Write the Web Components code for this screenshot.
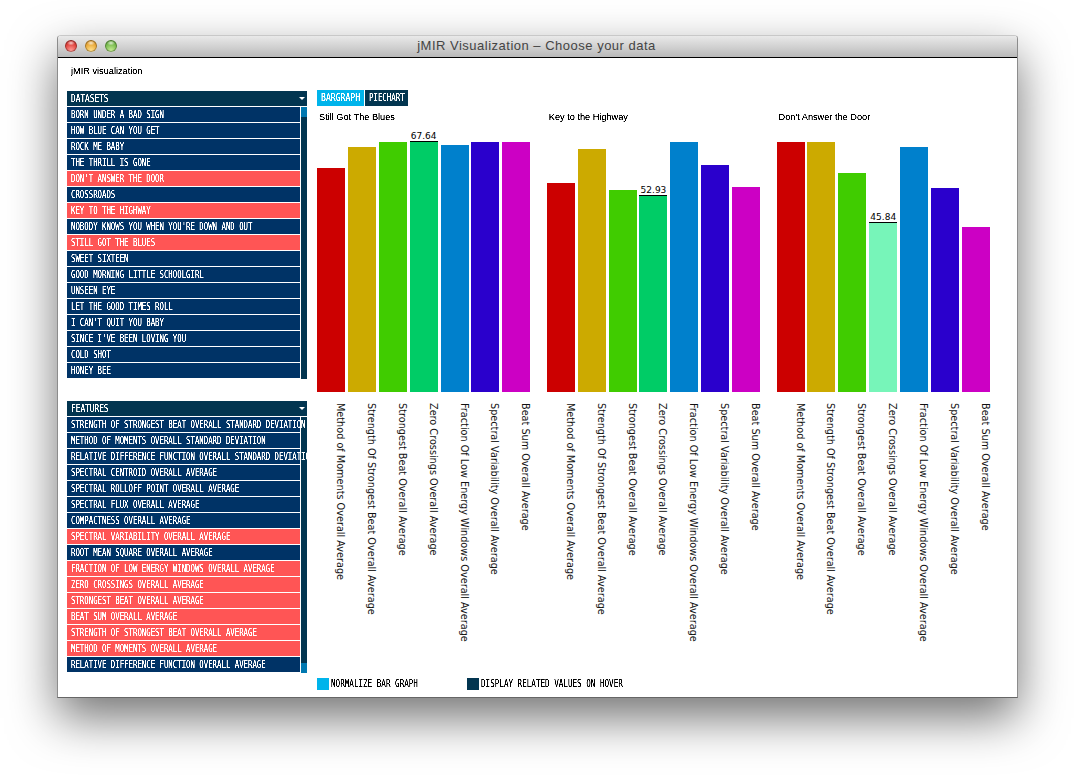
<!DOCTYPE html>
<html>
<head>
<meta charset="utf-8">
<title>jMIR Visualization - Choose your data</title>
<style>
  html, body { margin: 0; background: #fff; }
  body { height: 776px; overflow: hidden; font-family: "DejaVu Sans", sans-serif; }
</style>
</head>
<body>
<jmir-window title="jMIR Visualization – Choose your data" heading="jMIR visualization">
  <div slot="left">
    <jmir-list label="DATASETS">
      <jmir-item>BORN UNDER A BAD SIGN</jmir-item>
      <jmir-item>HOW BLUE CAN YOU GET</jmir-item>
      <jmir-item>ROCK ME BABY</jmir-item>
      <jmir-item>THE THRILL IS GONE</jmir-item>
      <jmir-item selected>DON'T ANSWER THE DOOR</jmir-item>
      <jmir-item>CROSSROADS</jmir-item>
      <jmir-item selected>KEY TO THE HIGHWAY</jmir-item>
      <jmir-item>NOBODY KNOWS YOU WHEN YOU'RE DOWN AND OUT</jmir-item>
      <jmir-item selected>STILL GOT THE BLUES</jmir-item>
      <jmir-item>SWEET SIXTEEN</jmir-item>
      <jmir-item>GOOD MORNING LITTLE SCHOOLGIRL</jmir-item>
      <jmir-item>UNSEEN EYE</jmir-item>
      <jmir-item>LET THE GOOD TIMES ROLL</jmir-item>
      <jmir-item>I CAN'T QUIT YOU BABY</jmir-item>
      <jmir-item>SINCE I'VE BEEN LOVING YOU</jmir-item>
      <jmir-item>COLD SHOT</jmir-item>
      <jmir-item>HONEY BEE</jmir-item>
    </jmir-list>
    <jmir-list label="FEATURES" thumb="bottom" style="margin-top:22px">
      <jmir-item>STRENGTH OF STRONGEST BEAT OVERALL STANDARD DEVIATION</jmir-item>
      <jmir-item>METHOD OF MOMENTS OVERALL STANDARD DEVIATION</jmir-item>
      <jmir-item>RELATIVE DIFFERENCE FUNCTION OVERALL STANDARD DEVIATION</jmir-item>
      <jmir-item>SPECTRAL CENTROID OVERALL AVERAGE</jmir-item>
      <jmir-item>SPECTRAL ROLLOFF POINT OVERALL AVERAGE</jmir-item>
      <jmir-item>SPECTRAL FLUX OVERALL AVERAGE</jmir-item>
      <jmir-item>COMPACTNESS OVERALL AVERAGE</jmir-item>
      <jmir-item selected>SPECTRAL VARIABILITY OVERALL AVERAGE</jmir-item>
      <jmir-item>ROOT MEAN SQUARE OVERALL AVERAGE</jmir-item>
      <jmir-item selected>FRACTION OF LOW ENERGY WINDOWS OVERALL AVERAGE</jmir-item>
      <jmir-item selected>ZERO CROSSINGS OVERALL AVERAGE</jmir-item>
      <jmir-item selected>STRONGEST BEAT OVERALL AVERAGE</jmir-item>
      <jmir-item selected>BEAT SUM OVERALL AVERAGE</jmir-item>
      <jmir-item selected>STRENGTH OF STRONGEST BEAT OVERALL AVERAGE</jmir-item>
      <jmir-item selected>METHOD OF MOMENTS OVERALL AVERAGE</jmir-item>
      <jmir-item>RELATIVE DIFFERENCE FUNCTION OVERALL AVERAGE</jmir-item>
    </jmir-list>
  </div>
  <jmir-tabs slot="tabs">
    <jmir-tab active style="width:47px;--sx:.81">BARGRAPH</jmir-tab>
    <jmir-tab style="width:43px;--sx:.74">PIECHART</jmir-tab>
  </jmir-tabs>
  <jmir-chart slot="charts" label="Still Got The Blues" heights="224,245,250,250,247,250,250" hover="3" value="67.64"></jmir-chart>
  <jmir-chart slot="charts" label="Key to the Highway" heights="209,243,202,196,250,227,205" hover="3" value="52.93"></jmir-chart>
  <jmir-chart slot="charts" label="Don't Answer the Door" heights="250,250,219,169,245,204,165" hover="3" value="45.84" highlight="#77f5b9"></jmir-chart>
  <jmir-check slot="options" color="#00b4eb" style="width:150px">NORMALIZE BAR GRAPH</jmir-check>
  <jmir-check slot="options" color="#023550">DISPLAY RELATED VALUES ON HOVER</jmir-check>
</jmir-window>

<script>
// Texto pixelado: la fuente original no existe, se comprime una monoespaciada
const CAPS = `
  display: block;
  font: 10px/15px "DejaVu Sans Mono", monospace;
  white-space: nowrap;
  transform: scaleX(var(--sx, .735));
  transform-origin: left center;
  filter: url(#crisp);
`;
// Filtro que endurece el borde de las letras, como en una fuente de mapa de bits
const CRISP = `
  <svg width="0" height="0" style="position:absolute">
    <filter id="crisp" x="0" y="0" width="100%" height="100%">
      <feComponentTransfer>
        <feFuncA type="linear" slope="2.6" intercept="-0.55"></feFuncA>
      </feComponentTransfer>
    </filter>
  </svg>
`;

class JmirWindow extends HTMLElement {
  constructor() {
    super();
    this.attachShadow({ mode: "open" });
    this.shadowRoot.innerHTML = `
      <style>
        :host {
          display: flex;
          flex-direction: column;
          box-sizing: border-box;
          width: 961px;
          height: 663px;
          margin: 35px 0 0 57px;
          border: 1px solid #8c8c8c;
          border-top-color: #c8c8c8;
          border-bottom-color: #666;
          border-radius: 4px 4px 0 0;
          box-shadow: 0 20px 48px rgba(0, 0, 0, .55);
          background: #fff;
        }
        .bar {
          flex: none;
          position: relative;
          display: flex;
          align-items: center;
          gap: 8px;
          box-sizing: border-box;
          height: 22px;
          padding: 0 0 2px 7px;
          border-bottom: 1px solid #000;
          border-radius: 3px 3px 0 0;
          background: linear-gradient(#e9e9e9, #d2d2d2 50%, #b9b9b9);
        }
        .light {
          width: 12px;
          height: 12px;
          border-radius: 50%;
          box-shadow: inset 0 0 0 1px rgba(0, 0, 0, .3);
        }
        .r { background: radial-gradient(ellipse 4px 2.5px at 50% 3px, rgba(255,255,255,.75), transparent), radial-gradient(circle at 50% 85%, #ff9a94, #e0443e 55%, #a81f1b); }
        .y { background: radial-gradient(ellipse 4px 2.5px at 50% 3px, rgba(255,255,255,.75), transparent), radial-gradient(circle at 50% 85%, #ffe08a, #e9a93a 55%, #b5791a); }
        .g { background: radial-gradient(ellipse 4px 2.5px at 50% 3px, rgba(255,255,255,.75), transparent), radial-gradient(circle at 50% 85%, #c4ec92, #79bb4f 55%, #4d8c2c); }
        .title {
          position: absolute;
          left: 0;
          right: 2px;
          text-align: center;
          font: 13px/20px "Liberation Sans", sans-serif;
          color: #444;
          letter-spacing: .5px;
        }
        .content {
          flex: 1;
          display: flex;
          flex-direction: column;
          padding: 8px 0 7px 9px;
          min-height: 0;
        }
        .heading {
          font: 9.2px/11px "Liberation Sans", sans-serif;
          color: #000;
          margin-left: 4px;
          height: 24px;
        }
        .heading span { display: block; filter: url(#crisp); }
        .main { flex: 1; display: flex; gap: 10px; min-height: 0; }
        .left { width: 240px; padding-top: 1px; }
        .right { flex: 1; display: flex; flex-direction: column; }
        .charts { display: flex; gap: 16.4px; flex: 1; }
        .options { display: flex; }
      </style>
      ${CRISP}
      <div class="bar">
        <span class="light r"></span><span class="light y"></span><span class="light g"></span>
        <span class="title">${this.getAttribute("title")}</span>
      </div>
      <div class="content">
        <div class="heading"><span>${this.getAttribute("heading")}</span></div>
        <div class="main">
          <div class="left"><slot name="left"></slot></div>
          <div class="right">
            <slot name="tabs"></slot>
            <div class="charts"><slot name="charts"></slot></div>
            <div class="options"><slot name="options"></slot></div>
          </div>
        </div>
      </div>
    `;
  }
}

class JmirList extends HTMLElement {
  constructor() {
    super();
    this.attachShadow({ mode: "open" });
    const bottom = this.getAttribute("thumb") === "bottom";
    this.shadowRoot.innerHTML = `
      <style>
        :host { display: block; width: 240px; overflow: hidden; }
        .head {
          position: relative;
          height: 15px;
          margin-bottom: 1px;
          background: #023550;
          color: #fff;
          padding-left: 4px;
        }
        .head span { ${CAPS} --sx: .78; }
        .arrow {
          position: absolute;
          right: 2px;
          top: 6px;
          width: 0;
          height: 0;
          border: 3px solid transparent;
          border-top: 3px solid #fff;
          border-bottom: 0;
        }
        .body { display: flex; gap: 1px; }
        .rows { position: relative; z-index: 1; width: 233px; flex: none; }
        .scroll { flex: 1; background: #023550; display: flex; flex-direction: column; justify-content: ${bottom ? "flex-end" : "flex-start"}; }
        .thumb { height: 10px; background: #0078b0; }
      </style>
      ${CRISP}
      <div class="head"><span>${this.getAttribute("label")}</span><i class="arrow"></i></div>
      <div class="body">
        <div class="rows"><slot></slot></div>
        <div class="scroll"><div class="thumb"></div></div>
      </div>
    `;
  }
}

class JmirItem extends HTMLElement {
  constructor() {
    super();
    this.attachShadow({ mode: "open" });
    this.shadowRoot.innerHTML = `
      <style>
        :host {
          display: block;
          height: 15px;
          margin-bottom: 1px;
          padding-left: 4px;
          background: #003366;
          color: #fff;
        }
        :host([selected]) { background: #ff5555; }
        span { ${CAPS} }
      </style>
      ${CRISP}
      <span><slot></slot></span>
    `;
  }
}

class JmirTabs extends HTMLElement {
  constructor() {
    super();
    this.attachShadow({ mode: "open" });
    this.shadowRoot.innerHTML = `
      <style>:host { display: flex; gap: 1px; height: 16px; }</style>
      <slot></slot>
    `;
  }
}

class JmirTab extends HTMLElement {
  constructor() {
    super();
    this.attachShadow({ mode: "open" });
    this.shadowRoot.innerHTML = `
      <style>
        :host {
          display: block;
          overflow: hidden;
          padding-left: 4px;
          box-sizing: border-box;
          background: #023550;
          color: #fff;
        }
        :host([active]) { background: #00b4eb; }
        span { ${CAPS} line-height: 16px; }
      </style>
      ${CRISP}
      <span><slot></slot></span>
    `;
  }
}

class JmirChart extends HTMLElement {
  constructor() {
    super();
    this.attachShadow({ mode: "open" });
    const colors = ["#cc0000", "#ccaa00", "#40cc00", "#00cc66", "#0080cc", "#2a00cc", "#cc00c4"];
    const names = [
      "Method of Moments Overall Average",
      "Strength Of Strongest Beat Overall Average",
      "Strongest Beat Overall Average",
      "Zero Crossings Overall Average",
      "Fraction Of Low Energy Windows Overall Average",
      "Spectral Variability Overall Average",
      "Beat Sum Overall Average",
    ];
    const heights = this.getAttribute("heights").split(",");
    const hover = Number(this.getAttribute("hover"));
    const value = this.getAttribute("value");
    const highlight = this.getAttribute("highlight");

    const bars = heights.map((h, i) => {
      const bg = i === hover && highlight ? highlight : colors[i];
      const tip = i === hover ? `<div class="tip">${value}</div>` : "";
      return `<div class="bar" style="height:${h}px;background:${bg}">${tip}</div>`;
    }).join("");
    const labels = names.map((n) => `<div class="cell"><span>${n}</span></div>`).join("");

    this.shadowRoot.innerHTML = `
      <style>
        :host { display: block; width: 213.4px; }
        .name {
          height: 14px;
          margin: 4px 0 0 2px;
          font: 9.2px/14px "Liberation Sans", sans-serif;
          color: #000;
          white-space: nowrap;
          filter: url(#crisp);
        }
        .bars { display: flex; gap: 2.9px; align-items: flex-end; height: 268px; }
        .bar { position: relative; width: 28px; flex: none; }
        .tip {
          position: absolute;
          left: 0;
          right: 0;
          bottom: 100%;
          text-align: center;
          font: 9px/9px "DejaVu Sans", sans-serif;
          color: #000;
          border-bottom: 1px solid #000;
        }
        .labels { display: flex; gap: 2.9px; margin-top: 11px; }
        .cell { width: 28px; flex: none; display: flex; justify-content: flex-end; }
        .cell span {
          writing-mode: vertical-rl;
          font: 9.7px/10px "DejaVu Sans", sans-serif;
          color: #111;
          white-space: nowrap;
        }
      </style>
      ${CRISP}
      <div class="name">${this.getAttribute("label")}</div>
      <div class="bars">${bars}</div>
      <div class="labels">${labels}</div>
    `;
  }
}

class JmirCheck extends HTMLElement {
  constructor() {
    super();
    this.attachShadow({ mode: "open" });
    this.shadowRoot.innerHTML = `
      <style>
        :host { display: flex; align-items: center; gap: 2px; height: 12px; color: #000; --sx: .76; }
        i { width: 12px; height: 12px; flex: none; background: ${this.getAttribute("color")}; }
        span { ${CAPS} line-height: 12px; }
      </style>
      ${CRISP}
      <i></i><span><slot></slot></span>
    `;
  }
}

customElements.define("jmir-window", JmirWindow);
customElements.define("jmir-list", JmirList);
customElements.define("jmir-item", JmirItem);
customElements.define("jmir-tabs", JmirTabs);
customElements.define("jmir-tab", JmirTab);
customElements.define("jmir-chart", JmirChart);
customElements.define("jmir-check", JmirCheck);
</script>
</body>
</html>
